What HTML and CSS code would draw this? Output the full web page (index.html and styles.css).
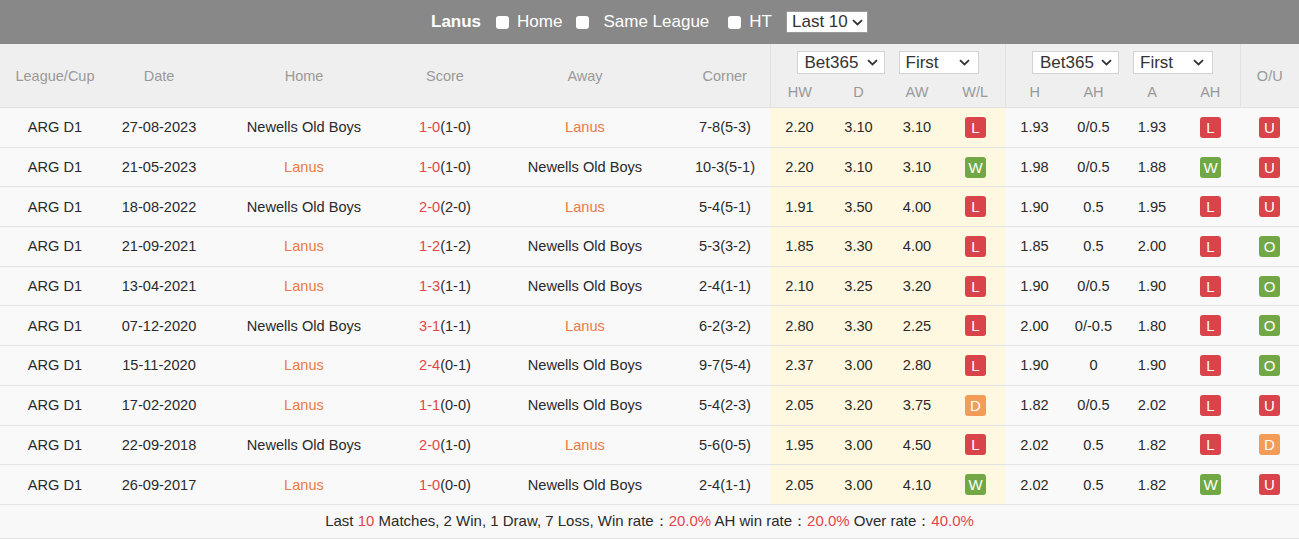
FILE: index.html
```html
<!DOCTYPE html>
<html>
<head>
<meta charset="utf-8">
<title>Lanus vs Newells Old Boys</title>
<link rel="stylesheet" href="styles.css">
</head>
<body>
<div class="topbar">
  <span class="team">Lanus</span>
  <label class="opt"><span class="cb"></span>Home</label>
  <label class="opt"><span class="cb"></span>Same League</label>
  <label class="opt"><span class="cb"></span>HT</label>
  <span class="sel sel-top">Last 10<svg class="chev" width="11" height="7" viewBox="0 0 11 7"><path d="M1 1.2 L5.5 5.5 L10 1.2" fill="none" stroke="#333" stroke-width="1.8"/></svg></span>
</div>
<table class="grid">
  <colgroup>
    <col style="width:110px"><col style="width:98px"><col style="width:192px"><col style="width:90px"><col style="width:190px"><col style="width:90px">
    <col style="width:59px"><col style="width:59px"><col style="width:58px"><col style="width:59px">
    <col style="width:59px"><col style="width:59px"><col style="width:58px"><col style="width:59px">
    <col style="width:59px">
  </colgroup>
  <thead>
    <tr class="h1">
      <th rowspan="2">League/Cup</th>
      <th rowspan="2">Date</th>
      <th rowspan="2">Home</th>
      <th rowspan="2">Score</th>
      <th rowspan="2">Away</th>
      <th rowspan="2">Corner</th>
      <th colspan="4" class="grp">
        <div class="sels">
          <span class="sel w88">Bet365<svg class="chev" width="11" height="7" viewBox="0 0 11 7"><path d="M1 1.2 L5.5 5.5 L10 1.2" fill="none" stroke="#333" stroke-width="1.8"/></svg></span>
          <span class="sel w80">First<svg class="chev" width="11" height="7" viewBox="0 0 11 7"><path d="M1 1.2 L5.5 5.5 L10 1.2" fill="none" stroke="#333" stroke-width="1.8"/></svg></span>
        </div>
      </th>
      <th colspan="4" class="grp">
        <div class="sels">
          <span class="sel w87">Bet365<svg class="chev" width="11" height="7" viewBox="0 0 11 7"><path d="M1 1.2 L5.5 5.5 L10 1.2" fill="none" stroke="#333" stroke-width="1.8"/></svg></span>
          <span class="sel w80">First<svg class="chev" width="11" height="7" viewBox="0 0 11 7"><path d="M1 1.2 L5.5 5.5 L10 1.2" fill="none" stroke="#333" stroke-width="1.8"/></svg></span>
        </div>
      </th>
      <th rowspan="2" class="grp">O/U</th>
    </tr>
    <tr class="h2">
      <th class="grp">HW</th><th>D</th><th>AW</th><th>W/L</th>
      <th class="grp">H</th><th>AH</th><th>A</th><th>AH</th>
    </tr>
  </thead>
  <tbody>
    <tr><td>ARG D1</td><td>27-08-2023</td><td>Newells Old Boys</td><td><span class="red">1-0</span>(1-0)</td><td class="hl">Lanus</td><td>7-8(5-3)</td>
      <td class="y">2.20</td><td class="y">3.10</td><td class="y">3.10</td><td class="y"><span class="b l">L</span></td>
      <td>1.93</td><td>0/0.5</td><td>1.93</td><td><span class="b l">L</span></td><td><span class="b l">U</span></td></tr>
    <tr><td>ARG D1</td><td>21-05-2023</td><td class="hl">Lanus</td><td><span class="red">1-0</span>(1-0)</td><td>Newells Old Boys</td><td>10-3(5-1)</td>
      <td class="y">2.20</td><td class="y">3.10</td><td class="y">3.10</td><td class="y"><span class="b w">W</span></td>
      <td>1.98</td><td>0/0.5</td><td>1.88</td><td><span class="b w">W</span></td><td><span class="b l">U</span></td></tr>
    <tr><td>ARG D1</td><td>18-08-2022</td><td>Newells Old Boys</td><td><span class="red">2-0</span>(2-0)</td><td class="hl">Lanus</td><td>5-4(5-1)</td>
      <td class="y">1.91</td><td class="y">3.50</td><td class="y">4.00</td><td class="y"><span class="b l">L</span></td>
      <td>1.90</td><td>0.5</td><td>1.95</td><td><span class="b l">L</span></td><td><span class="b l">U</span></td></tr>
    <tr><td>ARG D1</td><td>21-09-2021</td><td class="hl">Lanus</td><td><span class="red">1-2</span>(1-2)</td><td>Newells Old Boys</td><td>5-3(3-2)</td>
      <td class="y">1.85</td><td class="y">3.30</td><td class="y">4.00</td><td class="y"><span class="b l">L</span></td>
      <td>1.85</td><td>0.5</td><td>2.00</td><td><span class="b l">L</span></td><td><span class="b w">O</span></td></tr>
    <tr><td>ARG D1</td><td>13-04-2021</td><td class="hl">Lanus</td><td><span class="red">1-3</span>(1-1)</td><td>Newells Old Boys</td><td>2-4(1-1)</td>
      <td class="y">2.10</td><td class="y">3.25</td><td class="y">3.20</td><td class="y"><span class="b l">L</span></td>
      <td>1.90</td><td>0/0.5</td><td>1.90</td><td><span class="b l">L</span></td><td><span class="b w">O</span></td></tr>
    <tr><td>ARG D1</td><td>07-12-2020</td><td>Newells Old Boys</td><td><span class="red">3-1</span>(1-1)</td><td class="hl">Lanus</td><td>6-2(3-2)</td>
      <td class="y">2.80</td><td class="y">3.30</td><td class="y">2.25</td><td class="y"><span class="b l">L</span></td>
      <td>2.00</td><td>0/-0.5</td><td>1.80</td><td><span class="b l">L</span></td><td><span class="b w">O</span></td></tr>
    <tr><td>ARG D1</td><td>15-11-2020</td><td class="hl">Lanus</td><td><span class="red">2-4</span>(0-1)</td><td>Newells Old Boys</td><td>9-7(5-4)</td>
      <td class="y">2.37</td><td class="y">3.00</td><td class="y">2.80</td><td class="y"><span class="b l">L</span></td>
      <td>1.90</td><td>0</td><td>1.90</td><td><span class="b l">L</span></td><td><span class="b w">O</span></td></tr>
    <tr><td>ARG D1</td><td>17-02-2020</td><td class="hl">Lanus</td><td><span class="red">1-1</span>(0-0)</td><td>Newells Old Boys</td><td>5-4(2-3)</td>
      <td class="y">2.05</td><td class="y">3.20</td><td class="y">3.75</td><td class="y"><span class="b d">D</span></td>
      <td>1.82</td><td>0/0.5</td><td>2.02</td><td><span class="b l">L</span></td><td><span class="b l">U</span></td></tr>
    <tr><td>ARG D1</td><td>22-09-2018</td><td>Newells Old Boys</td><td><span class="red">2-0</span>(1-0)</td><td class="hl">Lanus</td><td>5-6(0-5)</td>
      <td class="y">1.95</td><td class="y">3.00</td><td class="y">4.50</td><td class="y"><span class="b l">L</span></td>
      <td>2.02</td><td>0.5</td><td>1.82</td><td><span class="b l">L</span></td><td><span class="b d">D</span></td></tr>
    <tr><td>ARG D1</td><td>26-09-2017</td><td class="hl">Lanus</td><td><span class="red">1-0</span>(0-0)</td><td>Newells Old Boys</td><td>2-4(1-1)</td>
      <td class="y">2.05</td><td class="y">3.00</td><td class="y">4.10</td><td class="y"><span class="b w">W</span></td>
      <td>2.02</td><td>0.5</td><td>1.82</td><td><span class="b w">W</span></td><td><span class="b l">U</span></td></tr>
  </tbody>
  <tfoot>
    <tr><td colspan="15" class="sum">Last <span class="red">10</span> Matches, 2 Win, 1 Draw, 7 Loss, Win rate：<span class="red">20.0%</span> AH win rate：<span class="red">20.0%</span> Over rate：<span class="red">40.0%</span></td></tr>
  </tfoot>
</table>
</body>
</html>
```
FILE: styles.css
```css
html, body {
  margin: 0;
  padding: 0;
  background: #ffffff;
}
body {
  font-family: "Liberation Sans", Arial, sans-serif;
  color: #333;
  font-size: 14px;
}
.topbar {
  height: 44px;
  background: #888888;
  display: flex;
  align-items: center;
  justify-content: center;
  color: #fff;
  font-size: 17px;
  white-space: nowrap;
}
.team {
  font-weight: bold;
  margin-right: 15px;
}
.opt {
  display: flex;
  align-items: center;
  margin-right: 14px;
}
.cb {
  display: inline-block;
  width: 13px;
  height: 13px;
  background: #fff;
  border-radius: 3px;
  margin-right: 8px;
}
.opt:nth-of-type(2) .cb { margin-right: 14px; }
.opt:nth-of-type(2) { margin-right: 19px; }
.sel {
  display: inline-flex;
  align-items: center;
  justify-content: space-between;
  box-sizing: border-box;
  background: #fff;
  border: 1px solid #d3d3d3;
  color: #333;
  font-size: 17px;
  line-height: 20px;
  height: 23px;
  padding: 0 6px;
  font-weight: normal;
  white-space: nowrap;
}
.sel-top {
  width: 82px;
  height: 22px;
  border-color: #999;
  padding-left: 5px;
  padding-right: 6px;
}
.chev { flex: none; margin-left: 4px; }
.w88 { width: 88px; }
.w87 { width: 87px; }
.w80 { width: 80px; }
.sel.w88, .sel.w87 { padding-left: 7px; padding-right: 6px; }
.sel.w80 { padding-left: 6px; padding-right: 8px; }

.grid {
  width: 1299px;
  border-collapse: collapse;
  table-layout: fixed;
}
.grid th {
  background: #efefef;
  color: #999;
  font-weight: normal;
  font-size: 14.5px;
  line-height: 17px;
  text-align: center;
  padding: 0;
}
.grid .h1 th { height: 30px; }
.grid .h1 th[rowspan] { vertical-align: middle; border-bottom: 1px solid #e0e0e0; padding-top: 2px; }
.grid .h1 th.grp[colspan] { vertical-align: top; padding-top: 7px; height: 23px; }
.grid .h2 th { height: 29px; padding-top: 4px; border-bottom: 1px solid #e0e0e0; }
.grid th.grp { border-left: 1px solid #e2e2e2; }
.sels {
  display: flex;
  justify-content: center;
  gap: 14px;
}
.grid td {
  height: 38.7px;
  padding: 0;
  text-align: center;
  background: #f9f9f9;
  border-bottom: 1px solid #e3e3e3;
  white-space: nowrap;
  font-size: 14.6px;
  color: #2a2a2a;
}
.grid td.y { background: #fef8e1; }
.hl { color: #ea7a45 !important; }
.red { color: #e3454b; }
.b {
  display: inline-block;
  width: 21px;
  height: 21px;
  line-height: 21px;
  border-radius: 3px;
  color: #fff;
  font-size: 15px;
  text-align: center;
  vertical-align: middle;
}
.b.l { background: #d9434a; }
.b.w { background: #71a845; }
.b.d { background: #f29c58; }
.grid td.sum {
  height: 33px;
  border-bottom: 1px solid #e2e2e2;
  background: #f8f8f8;
  font-size: 15px;
}
```
